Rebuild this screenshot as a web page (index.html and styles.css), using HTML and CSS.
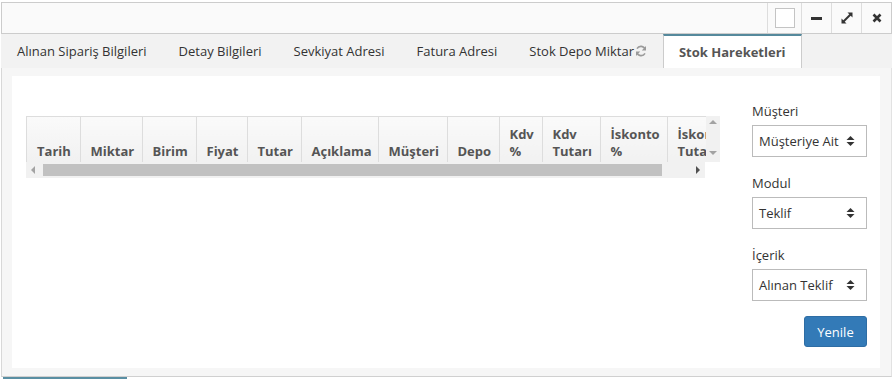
FILE: index.html
```html
<!DOCTYPE html>
<html lang="tr">
<head>
    <meta charset="UTF-8">
    <title>Stok Hareketleri</title>
    <link rel="stylesheet" href="styles.css">
</head>
<body>
<div class="window">
    <div class="titlebar">
        <div class="tb-cell tb-check"><span class="check"></span></div>
        <div class="tb-cell"><span class="minus"></span></div>
        <div class="tb-cell">
            <svg width="12" height="12" viewBox="0 0 12 12"><path d="M2 10 L10 2" stroke="#333" stroke-width="2"/><path d="M6.5 0.5 H11.5 V5.5 Z" fill="#333"/><path d="M0.5 6.5 V11.5 H5.5 Z" fill="#333"/></svg>
        </div>
        <div class="tb-cell">
            <svg width="10" height="10" viewBox="0 0 10 10"><path d="M1.5 1.5 L8.5 8.5 M8.5 1.5 L1.5 8.5" stroke="#333" stroke-width="2.6"/></svg>
        </div>
    </div>

    <ul class="tabs">
        <li>Alınan Sipariş Bilgileri</li>
        <li>Detay Bilgileri</li>
        <li>Sevkiyat Adresi</li>
        <li>Fatura Adresi</li>
        <li class="tab-icon">Stok Depo Miktar<svg width="12" height="12" viewBox="0 0 12 12"><path d="M10.2 4.6 A4.5 4.5 0 0 0 2 3.6" fill="none" stroke="#9a9a9a" stroke-width="1.6"/><path d="M11 1 V5.4 H6.8 Z" fill="#9a9a9a"/><path d="M1.8 7.4 A4.5 4.5 0 0 0 10 8.4" fill="none" stroke="#9a9a9a" stroke-width="1.6"/><path d="M1 11 V6.6 H5.2 Z" fill="#9a9a9a"/></svg></li>
        <li class="active">Stok Hareketleri</li>
    </ul>

    <div class="tab-body">
        <div class="panel">
            <div class="grid">
                <div class="grid-top">
                    <div class="grid-head">
                        <table>
                            <colgroup>
                                <col style="width:53px"><col style="width:62px"><col style="width:54px"><col style="width:51px">
                                <col style="width:54px"><col style="width:77px"><col style="width:69px"><col style="width:52px">
                                <col style="width:43px"><col style="width:58px"><col style="width:67px"><col style="width:70px">
                            </colgroup>
                            <tr>
                                <th>Tarih</th>
                                <th>Miktar</th>
                                <th>Birim</th>
                                <th>Fiyat</th>
                                <th>Tutar</th>
                                <th>Açıklama</th>
                                <th>Müşteri</th>
                                <th>Depo</th>
                                <th>Kdv<br>%</th>
                                <th>Kdv<br>Tutarı</th>
                                <th>İskonto<br>%</th>
                                <th>İskonto<br>Tutarı</th>
                            </tr>
                        </table>
                    </div>
                    <div class="vscroll">
                        <span class="arr arr-up"></span>
                        <span class="arr arr-down"></span>
                    </div>
                </div>
                <div class="hscroll">
                    <span class="arr arr-left"></span>
                    <div class="thumb"></div>
                    <span class="arr arr-right"></span>
                </div>
            </div>

            <div class="filters">
                <label>Müşteri</label>
                <div class="select">Müşteriye Ait<svg width="9" height="12" viewBox="0 0 9 12"><path d="M0.5 5 L4.5 1 L8.5 5 Z M0.5 7 L4.5 11 L8.5 7 Z" fill="#333"/></svg></div>
                <label>Modul</label>
                <div class="select">Teklif<svg width="9" height="12" viewBox="0 0 9 12"><path d="M0.5 5 L4.5 1 L8.5 5 Z M0.5 7 L4.5 11 L8.5 7 Z" fill="#333"/></svg></div>
                <label>İçerik</label>
                <div class="select">Alınan Teklif<svg width="9" height="12" viewBox="0 0 9 12"><path d="M0.5 5 L4.5 1 L8.5 5 Z M0.5 7 L4.5 11 L8.5 7 Z" fill="#333"/></svg></div>
                <div class="actions"><button>Yenile</button></div>
            </div>
        </div>
    </div>
</div>
<div class="footer-line"></div>
</body>
</html>
```

FILE: styles.css
```css
body, html {
    margin: 0;
    background: #fff;
    font-family: "Open Sans", "Liberation Sans", sans-serif;
    font-size: 13px;
    color: #333;
}
.window {
    width: 891px;
    margin: 2px 0 0 1px;
}
.titlebar {
    height: 30px;
    border: 1px solid #ccc;
    background: #fafafa;
    display: flex;
    justify-content: flex-end;
}
.tb-cell {
    width: 29px;
    border-left: 1px solid #ddd;
    display: flex;
    align-items: center;
    justify-content: center;
}
.tb-check {
    width: 33px;
}
.check {
    width: 18px;
    height: 18px;
    border: 1px solid #c4c4c4;
    background: #fff;
}
.minus {
    width: 11px;
    height: 3px;
    background: #333;
}
.tabs {
    list-style: none;
    margin: 0;
    padding: 0;
    height: 34px;
    display: flex;
    background: #f2f2f2;
}
.tabs li {
    padding: 0 16px;
    line-height: 34px;
    white-space: nowrap;
}
.tab-icon svg {
    margin-left: 1px;
    vertical-align: -1px;
}
.tabs li.active {
    background: #fff;
    border-top: 2px solid #55899c;
    border-left: 1px solid #ccc;
    border-right: 1px solid #ccc;
    line-height: 32px;
    padding: 0 15px;
    font-weight: bold;
    color: #555;
}
.tab-body {
    height: 292px;
    padding: 8px 11px 8px 10px;
    background: #f6f6f6;
    border-left: 1px solid #d8d8d8;
    border-right: 1px solid #e2e2e2;
    border-bottom: 1px solid #d0d0d0;
}
.panel {
    height: 292px;
    box-sizing: border-box;
    background: #fff;
    padding: 0 13px 0 14px;
    display: flex;
}
.grid {
    width: 694px;
    padding-top: 40px;
}
.grid-top {
    display: flex;
    height: 46px;
}
.grid-head {
    width: 680px;
    overflow: hidden;
    border-top: 1px solid #ddd;
    border-left: 1px solid #ddd;
    box-sizing: border-box;
}
.grid-head table {
    border-collapse: collapse;
    table-layout: fixed;
    width: 710px;
}
.grid-head th {
    height: 43px;
    padding: 0 4px 6px 10px;
    vertical-align: bottom;
    text-align: left;
    line-height: 17px;
    font-size: 13px;
    color: #555;
    white-space: nowrap;
    overflow: hidden;
    border-right: 1px solid #ddd;
    border-bottom: 2px solid #e2e2e2;
    background: linear-gradient(#fafafa, #f0f0f0);
}
.vscroll {
    width: 14px;
    background: #f1f1f1;
    position: relative;
}
.hscroll {
    width: 679px;
    height: 16px;
    background: #f1f1f1;
    position: relative;
}
.thumb {
    position: absolute;
    left: 17px;
    top: 2px;
    width: 619px;
    height: 12px;
    background: #c1c1c1;
}
.arr {
    position: absolute;
    width: 0;
    height: 0;
    border: 4px solid transparent;
}
.arr-up {
    left: 3px;
    top: 4px;
    border-bottom-color: #a3a3a3;
    border-top-width: 0;
}
.arr-down {
    left: 3px;
    top: 35px;
    border-top-color: #a3a3a3;
    border-bottom-width: 0;
}
.arr-left {
    left: 5px;
    top: 4px;
    border-right-color: #a3a3a3;
    border-left-width: 0;
}
.arr-right {
    left: 670px;
    top: 4px;
    border-left-color: #505050;
    border-right-width: 0;
}
.filters {
    width: 115px;
    margin-left: 32px;
    padding-top: 25px;
    display: flex;
    flex-direction: column;
}
.filters label {
    line-height: 20px;
    margin-bottom: 4px;
}
.select {
    height: 32px;
    box-sizing: border-box;
    border: 1px solid #bbb;
    padding: 0 11px 0 6px;
    line-height: 30px;
    margin-bottom: 16px;
    display: flex;
    justify-content: space-between;
    align-items: center;
    white-space: nowrap;
}
.actions {
    display: flex;
    justify-content: flex-end;
    margin-top: -1px;
}
button {
    width: 63px;
    height: 31px;
    background: #337ab7;
    border: 1px solid #2e6da4;
    border-radius: 3px;
    color: #fff;
    font-family: inherit;
    font-size: 13px;
}
.footer-line {
    width: 124px;
    height: 2px;
    margin-left: 3px;
    background: #5a8fa3;
}
```
